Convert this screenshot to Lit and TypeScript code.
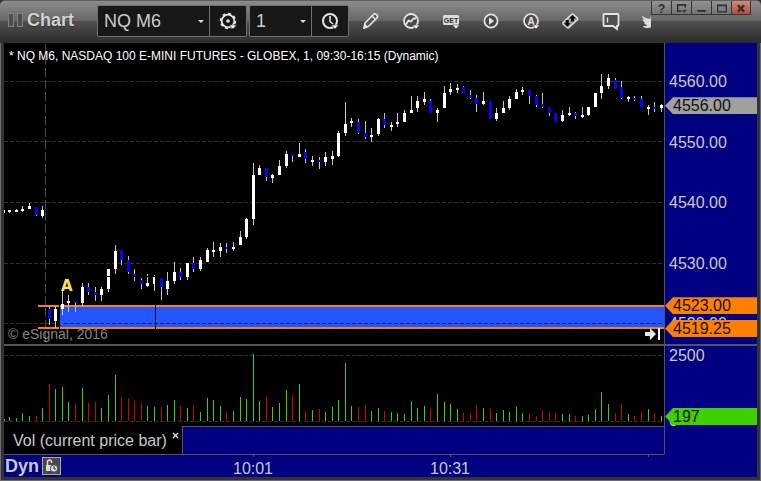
import { LitElement, html, svg, css } from "lit";
import { customElement } from "lit/decorators.js";

type Bar = [high: number, low: number, top: number, bottom: number, down: number, volume: number];

// One entry per minute: wick and body extents on the price pane, direction, volume bar height.
const BARS: Bar[] = [
  [210, 213, 210, 213, 0, 2], [210, 213, 210, 212, 0, 4], [209, 212, 210, 212, 0, 3], [206, 212, 209, 211, 0, 8],
  [203, 209, 206, 209, 0, 5], [207, 216, 207, 215, 1, 5], [206, 218, 210, 216, 0, 13], [306, 325, 309, 319, 1, 37],
  [306, 328, 309, 321, 0, 32], [291, 315, 304, 309, 0, 34], [295, 312, 301, 303, 0, 19], [301, 312, 301, 303, 1, 17],
  [283, 307, 287, 303, 0, 33], [283, 295, 287, 292, 1, 18], [287, 301, 292, 295, 1, 19], [287, 301, 289, 295, 0, 13],
  [269, 292, 269, 289, 0, 26], [245, 274, 251, 269, 0, 46], [250, 265, 250, 260, 1, 24], [256, 274, 260, 272, 1, 23],
  [269, 281, 274, 276, 1, 20], [278, 289, 280, 284, 1, 18], [274, 287, 283, 286, 0, 15], [275, 291, 277, 284, 0, 14],
  [278, 300, 278, 287, 1, 14], [272, 295, 281, 289, 0, 16], [262, 284, 272, 281, 0, 21], [268, 280, 272, 277, 1, 15],
  [263, 280, 263, 277, 0, 13], [257, 272, 263, 269, 1, 16], [257, 271, 260, 269, 0, 9], [248, 262, 250, 262, 0, 23],
  [242, 257, 250, 252, 0, 21], [243, 257, 247, 251, 0, 15], [243, 253, 247, 249, 1, 9], [242, 251, 247, 249, 0, 10],
  [231, 245, 237, 245, 0, 24], [218, 239, 219, 237, 0, 22], [163, 225, 175, 219, 0, 67], [165, 175, 168, 175, 0, 20],
  [168, 181, 168, 177, 1, 24], [174, 183, 175, 178, 0, 14], [160, 175, 166, 175, 0, 18], [151, 168, 154, 166, 0, 31],
  [154, 162, 154, 156, 1, 26], [143, 157, 154, 157, 0, 37], [149, 163, 152, 159, 1, 10], [156, 166, 160, 162, 0, 11],
  [157, 169, 160, 162, 1, 12], [152, 166, 157, 162, 0, 9], [151, 165, 156, 159, 0, 14], [131, 157, 133, 156, 0, 21],
  [102, 136, 124, 133, 0, 58], [118, 127, 121, 123, 0, 15], [119, 134, 122, 133, 1, 14], [121, 139, 133, 137, 1, 16],
  [128, 142, 135, 137, 0, 10], [118, 136, 119, 134, 0, 13], [113, 128, 119, 125, 1, 10], [122, 131, 125, 127, 0, 9],
  [113, 127, 122, 124, 0, 8], [110, 122, 113, 122, 0, 7], [96, 113, 110, 113, 0, 20], [96, 112, 101, 108, 0, 13],
  [92, 105, 99, 102, 0, 15], [99, 113, 101, 113, 1, 12], [108, 122, 110, 113, 0, 27], [86, 108, 93, 108, 0, 19],
  [83, 95, 89, 92, 0, 17], [84, 93, 88, 90, 0, 12], [86, 93, 87, 93, 1, 8], [90, 99, 95, 98, 1, 8],
  [95, 112, 98, 104, 1, 16], [92, 105, 101, 104, 0, 13], [101, 119, 101, 119, 1, 12], [108, 121, 113, 119, 0, 8],
  [101, 113, 108, 113, 0, 11], [96, 110, 99, 108, 0, 9], [89, 99, 92, 99, 0, 14], [87, 95, 90, 92, 0, 8],
  [90, 104, 90, 96, 1, 7], [95, 107, 96, 105, 1, 5], [93, 108, 104, 107, 1, 11], [107, 116, 107, 113, 1, 9],
  [113, 122, 113, 122, 1, 8], [110, 122, 115, 121, 0, 7], [107, 116, 113, 115, 0, 7], [112, 119, 113, 116, 1, 5],
  [107, 118, 115, 117, 0, 5], [107, 116, 107, 115, 0, 6], [93, 107, 93, 107, 0, 12], [74, 99, 86, 93, 0, 29],
  [74, 89, 78, 86, 0, 17], [78, 89, 80, 89, 1, 8], [81, 99, 87, 98, 1, 17], [96, 102, 97, 99, 0, 7],
  [96, 101, 98, 100, 1, 5], [96, 108, 99, 108, 1, 10], [105, 115, 107, 109, 0, 12], [102, 112, 107, 109, 1, 8],
  [104, 112, 105, 108, 0, 5],
];

const barX = (i: number) => Math.floor(253.2 + (i - 38) * 6.58);
const priceTop = (price: number) => `${((81 + (4560 - price) * 6.06 - 43) / 301) * 100}%`;
const volumeTop = (y: number) => `${(y / 80) * 100}%`;
const timeLeft = (x: number) => `${((x - 4) / 660) * 100}%`;

const drop = svg`<path d="M12.500 15h7L16 19z" fill="#fff" stroke="#3c3c3c" stroke-width=".6"/>`;

const ICONS: Record<string, unknown> = {
  gear: svg`<circle cx="11" cy="11" r="6.3" fill="none" stroke="#e4e4e4" stroke-width="1.8"/>
    <circle cx="11" cy="11" r="7.4" fill="none" stroke="#e4e4e4" stroke-width="1.6" stroke-dasharray="3 2.8"/>
    <circle cx="11" cy="11" r="1.8" fill="#e4e4e4"/>${drop}`,
  clock: svg`<circle cx="11" cy="11" r="7" fill="none" stroke="#e4e4e4" stroke-width="2"/>
    <path d="M11 6v5.5l3 2.5" fill="none" stroke="#e4e4e4" stroke-width="1.6"/>${drop}`,
  pencil: svg`<path d="M4 18l1.200-5.200 8.300-8.300q1.400-1.200 2.800 0l.6.6q1.400 1.400 0 2.800l-8.200 8.400z" fill="#555" stroke="#e4e4e4" stroke-width="1.600" stroke-linejoin="round"/>
    <path d="M12 6l4 4M4 18l1-3.200 2 2z" fill="#e4e4e4" stroke="#e4e4e4" stroke-width="1.400"/>`,
  study: svg`<circle cx="11" cy="11" r="7" fill="#4a4a4a" stroke="#e4e4e4" stroke-width="1.8"/>
    <path d="M6 14.500l2.500-4 2.400 1.100L13.500 8.500H16" fill="none" stroke="#e4e4e4" stroke-width="1.800"/>${drop}`,
  get: svg`<rect x="3" y="5" width="16" height="10" rx="1.500" fill="#dcdcdc"/>
    <text x="11" y="13" text-anchor="middle" class="glyph" fill="#2c2c2c">GET</text>${drop}`,
  play: svg`<circle cx="11" cy="11" r="6.600" fill="#4a4a4a" stroke="#e4e4e4" stroke-width="1.700"/><path d="M9 7.200v7.600l5-3.800z" fill="#e4e4e4"/>`,
  auto: svg`<circle cx="11" cy="11" r="7" fill="#4a4a4a" stroke="#e4e4e4" stroke-width="1.700"/>
    <text x="11" y="15" text-anchor="middle" class="letter" fill="#e4e4e4">A</text>${drop}`,
  trade: svg`<path d="M3.300 12.300l8.200-7.800q1-.9 2 0l3.800 3.300q1 1 0 2l-8.200 7.800q-1 .9-2 0l-3.800-3.300q-1-1 0-2z" fill="#a0a0a0" stroke="#e0e0e0" stroke-width="1.400"/>
    <path d="M12.500 5l3.500 3.500h-2v3h-3v-3H9zM7.200 16.800l-3.500-3.500h2v-3.300h3v3.300h2z" fill="#080808"/>`,
  chat: svg`<path d="M3.500 5q0-1 1-1h13q1 0 1 1v10q0 1-1 1h-.5v3l-4-3H4.500q-1 0-1-1z" fill="#505050" stroke="#e4e4e4" stroke-width="1.800"/><path d="M7.500 7.500v5" stroke="#e4e4e4" stroke-width="1.300"/>`,
  bird: svg`<path d="M2.500 5.500c2 2.200 4.500 3.200 7.800 3.400C9.800 5.500 13.500 3.500 16 5.800l2.500-.8-1 2c.5 6-3.500 11-9.500 11-2.500 0-4-.5-5.500-1.500 2 0 3.500-.4 4.700-1.400-1.600-.2-2.700-1-3.200-2.300h1.400C3.800 12 2.800 11 2.700 9.300l1.400.4C2.800 8.500 2.200 7.200 2.500 5.500z" fill="#dcdcdc"/>`,
};

const icon = (name: string) => html`<svg width="22" height="22" viewBox="0 0 22 22" aria-hidden="true">${ICONS[name]}</svg>`;

const TOOLS = [
  ["pencil", "Draw"], ["study", "Studies"], ["get", "Advanced GET"], ["play", "Playback"], ["auto", "Alerts"],
  ["trade", "Trade"], ["chat", "Notes"], ["bird", "Tweet"],
];

const WINDOW_BUTTONS: [string, string, unknown][] = [
  ["help", "Help", svg`<text x="10" y="12" text-anchor="middle" class="question">?</text>`],
  ["dock", "Dock", svg`<path d="M14 6.500V3.500H6v7h4M5 4h10" stroke-width="1.500"/><path d="M10.500 9h5L13 12z" fill="#2e2e2e" stroke="none"/>`],
  ["min", "Minimize", svg`<path d="M5.500 10h9" stroke-width="2"/>`],
  ["max", "Maximize", svg`<path d="M6 4h9v7H6zM6 4.500h9" stroke-width="1.400"/>`],
  ["close", "Close", svg`<path d="M6.500 4l7 7M13.500 4l-7 7" stroke-width="2.500"/>`],
];

@customElement("chart-toolbar")
export class ChartToolbar extends LitElement {
  static styles = css`
    :host {
      display: flex;
      height: 43px;
      box-sizing: border-box;
      border-top: 1px solid #5c5c5c;
      border-radius: 5px 5px 0 0;
      background: linear-gradient(#8c8c8c, #666 20px, #505050 20px, #2c2c2c);
      font-family: "Liberation Sans", Arial, sans-serif;
      overflow: hidden;
    }
    .tools { display: flex; flex: 1; min-width: 0; overflow: hidden; }
    .grip { display: flex; flex: none; gap: 3px; padding: 12px 4px 0 8px; }
    .grip span { width: 4px; height: 12px; border: 1px solid #808080; background: #4e4e4e; }
    h1 { margin: 0; flex: none; width: 70px; font-size: 18px; line-height: 39px; color: #d2d2d2; text-shadow: 0 1px 1px #333; }
    .combo {
      display: flex;
      flex: none;
      height: 32px;
      margin: 4px 2px 0 0;
      box-sizing: border-box;
      border: 1px solid #707070;
      border-radius: 2px;
      background: #171717;
    }
    select {
      appearance: none;
      border: 0;
      margin: 0;
      padding: 0 6px;
      background: transparent;
      color: #ccc;
      font: 18px "Liberation Sans", Arial, sans-serif;
    }
    .symbol { width: 111px; }
    .interval { width: 61px; }
    .arrow {
      width: 0;
      margin: 14px 5px 0 -11px;
      border: 3px solid transparent;
      border-top-color: #ddd;
      border-bottom: 0;
      height: 0;
      pointer-events: none;
    }
    button { display: flex; align-items: center; justify-content: center; flex: none; padding: 0; border: 0; background: none; }
    .combo button { width: 37px; border-left: 1px solid #707070; }
    .tool { width: 40px; height: 40px; }
    .glyph { font: 700 7px "Liberation Sans", sans-serif; }
    .letter { font: 700 10px "Liberation Sans", sans-serif; }
    .question { font: 700 13px "Liberation Sans", sans-serif; fill: #2e2e2e; stroke: none; }
    .window { display: flex; flex: none; height: 14px; width: 110px; }
    .window button { width: 20px; height: 14px; box-sizing: border-box; border: solid #333; border-width: 0 0 1px 1px; background: linear-gradient(#939393, #747474); }
    .window .close { background: linear-gradient(#cf8a7e, #b84c3c); border-right-width: 1px; }
    .window svg { fill: none; stroke: #2e2e2e; }
  `;
  render() {
    return html`
      <div class="tools">
        <div class="grip"><span></span><span></span></div>
        <h1>Chart</h1>
        <div class="combo">
          <select class="symbol" aria-label="Symbol"><option>NQ M6</option></select><span class="arrow"></span>
          <button aria-label="Symbol settings">${icon("gear")}</button>
        </div>
        <div class="combo">
          <select class="interval" aria-label="Interval"><option>1</option></select><span class="arrow"></span>
          <button aria-label="Time template">${icon("clock")}</button>
        </div>
        ${TOOLS.map(([name, label]) => html`<button class="tool" aria-label=${label}>${icon(name)}</button>`)}
      </div>
      <div class="window">
        ${WINDOW_BUTTONS.map(([name, label, art]) => html`<button class=${name} aria-label=${label}><svg width="20" height="14" viewBox="0 0 20 14">${art}</svg></button>`)}
      </div>`;
  }
}

@customElement("app-root")
export class AppRoot extends LitElement {
  static styles = css`
    :host {
      display: flex;
      flex-direction: column;
      min-height: 100vh;
      background: #303030;
      font: 16px/17px "Liberation Sans", Arial, sans-serif;
      color: #c8c8c8;
    }
    .frame {
      flex: 1;
      display: flex;
      border: solid #6c6c6c;
      border-width: 0 1px 1px;
    }
    .body {
      flex: 1;
      min-width: 0;
      display: grid;
      grid-template-columns: minmax(0, 1fr) 93px;
      grid-template-rows: minmax(301px, 1fr) 82px 29px 22px;
      border: solid #333;
      border-width: 0 3px 3px;
      background: #000080;
    }
    .pane { position: relative; background: #000; min-width: 0; }
    .plot { display: block; position: absolute; width: 100%; height: 100%; shape-rendering: crispEdges; }
    .axis { position: relative; border-left: 1px solid #555; }
    .vol { border-top: 2px solid #555; }
    .title { position: absolute; left: 5px; top: 5px; margin: 0; font-size: 12px; font-weight: 400; color: #fff; white-space: nowrap; }
    .mark { position: absolute; left: 4px; bottom: 1px; font-size: 14px; color: #858585; }
    .note { position: absolute; left: 57px; top: 235px; font: 700 15px/17px "DejaVu Sans", sans-serif; color: #ffe34d; }
    .latest { position: absolute; right: 3px; bottom: 3px; padding: 0; border: 0; background: none; display: flex; }
    .label, .tag { position: absolute; height: 17px; margin-top: -8px; }
    .label { left: 4px; }
    .tag { left: 0; right: 0; padding-left: 8px; color: #111; clip-path: polygon(0 50%, 8px 0, 100% 0, 100% 100%, 8px 100%); }
    .last { background: #a0a0a0; }
    .level { background: #ff8000; }
    .volume { background: #40d000; }
    .tabs { display: flex; border-bottom: 1px solid #555; }
    .tab { display: flex; box-sizing: border-box; width: 179px; padding: 6px 3px 0 9px; border-right: 1px solid #555; background: #000; justify-content: space-between; white-space: nowrap; }
    .tab button { padding: 0; border: 0; background: none; display: flex; height: 7px; }
    .fill { flex: 1; border-top: 1px solid #555; }
    .corner { border-left: 1px solid #555; margin-bottom: 1px; }
    .times { grid-column: 1 / -1; display: grid; grid-template-columns: minmax(0, 1fr) 93px; }
    .scale { position: relative; display: flex; gap: 3px; padding: 2px 0 0 1px; }
    .dyn { font-size: 18px; line-height: 19px; }
    .lock { width: 19px; height: 18px; padding: 0; border: 1px solid #aaa; background: #484848; display: flex; }
    .time { position: absolute; top: 5px; transform: translateX(-50%); }
    .tick { position: absolute; top: 0; width: 1px; height: 2px; background: #555; }
  `;

  private candle(b: Bar, i: number) {
    const x = barX(i);
    const [high, low, top, bottom, down] = b;
    return svg`<rect x=${x} y=${high} width="1" height=${low - high} fill="#c4c4c4"/>
      <rect x=${x - 1} y=${top} width="3" height=${bottom - top} fill=${down ? "#0008f0" : "#fff"}/>`;
  }

  render() {
    return html`
      <chart-toolbar></chart-toolbar>
      <div class="frame"><main class="body">
        <section class="pane">
          <svg class="plot" viewBox="4 43 660 301" preserveAspectRatio="none" role="img" aria-label="Price candles">
            <rect x="60" y="307" width="604" height="20" fill="#2255ff"/>
            ${[81, 141, 202, 263].map((y) => svg`<path d="M4 ${y + 0.5}H664" stroke="#303030" stroke-dasharray="4 2"/>`)}
            <path d="M4 323.5H60" stroke="#303030" stroke-dasharray="4 2"/>
            <path d="M64 323.5H664" stroke="#10246c" stroke-dasharray="4 2"/>
            <path d="M45.5 43V344" stroke="#484848" stroke-dasharray="9 3" stroke-dashoffset="-1"/>
            <path d="M38 306H664M38 328H664" stroke="#ff8000" stroke-width="2"/>
            ${BARS.map((b, i) => this.candle(b, i))}
            <path d="M59.5 329V276.5H155.5V329" fill="none" stroke="#000"/>
          </svg>
          <h2 class="title">* NQ M6, NASDAQ 100 E-MINI FUTURES - GLOBEX, 1, 09:30-16:15 (Dynamic)</h2>
          <span class="note">A</span>
          <span class="mark">© eSignal, 2016</span>
          <button class="latest" aria-label="Go to latest bar">
            <svg width="16" height="14" viewBox="0 0 16 14"><path d="M0 5h5V1l6 6-6 6V9H0z" fill="#e8e8e8"/><path d="M13 1h2v12h-2z" fill="#fff"/></svg>
          </button>
        </section>
        <aside class="axis">
          ${[4560, 4550, 4540, 4530, 4520].map((p) => html`<span class="label" style="top:${priceTop(p)}">${p}.00</span>`)}
          <span class="tag last" style="top:${priceTop(4556)}">4556.00</span>
          <span class="tag level" style="top:${priceTop(4523)}">4523.00</span>
          <span class="tag level" style="top:${priceTop(4519.25)}">4519.25</span>
        </aside>
        <section class="pane vol">
          <svg class="plot" viewBox="4 346 660 80" preserveAspectRatio="none" role="img" aria-label="Volume">
            <path d="M4 355.5H664M4 421.5H664" stroke="#303030" stroke-dasharray="4 2"/>
            ${BARS.map((b, i) => svg`<rect x=${Math.max(4, barX(i))} y=${421 - b[5]} width="1" height=${b[5]} fill=${b[4] ? "#d00000" : "#40d000"}/>`)}
          </svg>
        </section>
        <aside class="axis vol">
          <span class="label" style="top:${volumeTop(9)}">2500</span>
          <span class="label" style="top:${volumeTop(74)}">0</span>
          <span class="tag volume" style="top:${volumeTop(70)}">197</span>
        </aside>
        <div class="tabs">
          <div class="tab">Vol (current price bar)
            <button aria-label="Close study"><svg width="7" height="7" viewBox="0 0 7 7"><path d="M1 1l5 5M6 1L1 6" stroke="#ddd" stroke-width="1.400"/></svg></button>
          </div>
          <div class="fill"></div>
        </div>
        <div class="corner"></div>
        <footer class="times">
          <div class="scale">
            <strong class="dyn">Dyn</strong>
            <button class="lock" aria-label="Lock time">
              <svg width="17" height="16" viewBox="0 0 17 16"><path d="M4.500 7V4q0-2 2-2t2 2v1" fill="none" stroke="#ddd" stroke-width="1.500"/><path d="M3 7h7v6H3z" fill="#ddd"/><circle cx="11" cy="10.500" r="3.700" fill="#ddd" stroke="#484848"/><path d="M11 8v3h2" fill="none" stroke="#333"/></svg>
            </button>
            ${[253, 450, 648].map((x) => html`<i class="tick" style="left:${timeLeft(x)}"></i>`)}
            <span class="time" style="left:${timeLeft(253)}">10:01</span>
            <span class="time" style="left:${timeLeft(450)}">10:31</span>
          </div>
        </footer>
      </main></div>`;
  }
}
